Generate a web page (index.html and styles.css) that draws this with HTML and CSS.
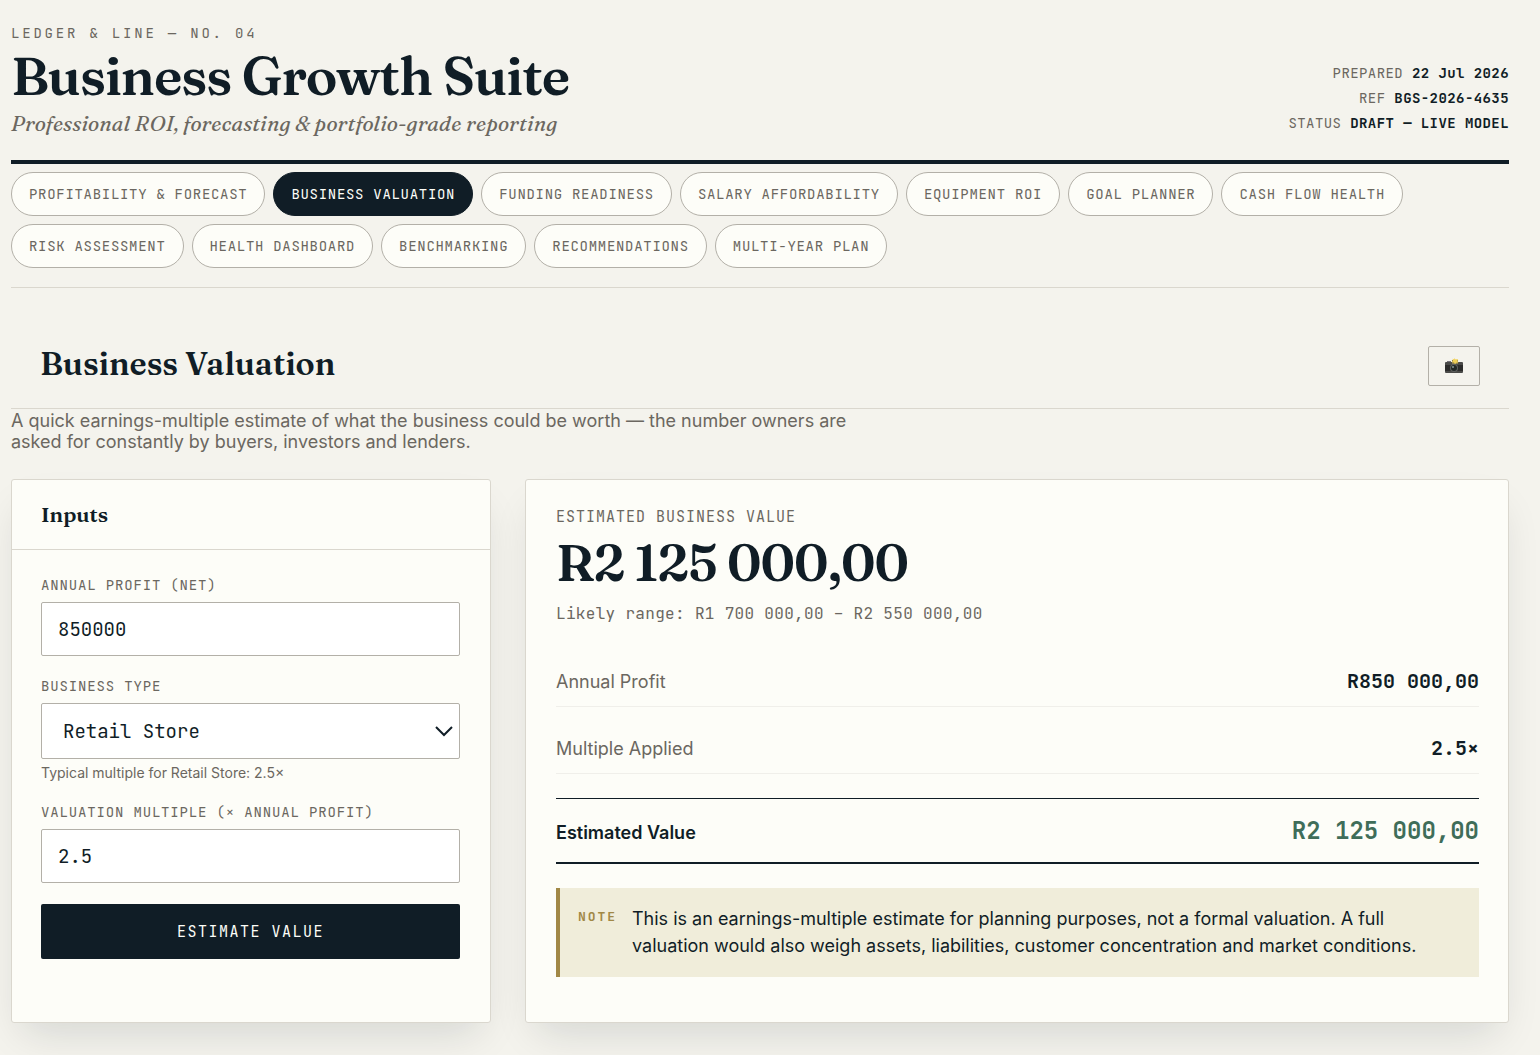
FILE: index.html
```html
<!DOCTYPE html>
<html lang="en">

<head>
    <meta charset="UTF-8" />
    <meta name="viewport" content="width=device-width, initial-scale=1" />
    <title>Business Growth Suite</title>
    <link rel="stylesheet" href="styles.css">
</head>

<body>
    <header class="masthead">
        <div>
            <div class="eyebrow">LEDGER &amp; LINE — NO. 04</div>
            <h1>Business Growth Suite</h1>
            <p class="tagline">Professional ROI, forecasting &amp; portfolio-grade reporting</p>
        </div>
        <div class="meta">
            <div>PREPARED <b>22 Jul 2026</b></div>
            <div>REF <b>BGS-2026-4635</b></div>
            <div>STATUS <b>DRAFT — LIVE MODEL</b></div>
        </div>
    </header>

    <nav class="tabs">
        <button class="tab">PROFITABILITY &amp; FORECAST</button>
        <button class="tab active">BUSINESS VALUATION</button>
        <button class="tab">FUNDING READINESS</button>
        <button class="tab">SALARY AFFORDABILITY</button>
        <button class="tab">EQUIPMENT ROI</button>
        <button class="tab">GOAL PLANNER</button>
        <button class="tab">CASH FLOW HEALTH</button>
        <button class="tab">RISK ASSESSMENT</button>
        <button class="tab">HEALTH DASHBOARD</button>
        <button class="tab">BENCHMARKING</button>
        <button class="tab">RECOMMENDATIONS</button>
        <button class="tab">MULTI-YEAR PLAN</button>
    </nav>

    <main>
        <div class="section-head">
            <h2>Business Valuation</h2>
            <button class="snap" aria-label="Save snapshot">
                <svg width="18" height="16" viewBox="0 0 18 16">
                    <rect x="2" y="3" width="4" height="2" fill="#77727a" />
                    <rect x="0" y="4" width="18" height="11" rx="1" fill="#4a4a48" />
                    <rect x="0" y="7" width="18" height="6" fill="#2c2c2b" />
                    <rect x="7" y="2" width="6" height="4" fill="#8d7f50" />
                    <path d="M9.500 0l1 1.500 2.500-.5-.7 2 1.200 1.500-2.300.3-1.200 1.400-1-1.600-2.300-.3 1.300-1.500-.4-2 1.600.6z" fill="#f0cf55" />
                    <circle cx="9" cy="10" r="4" fill="#5f6260" />
                    <circle cx="9" cy="10" r="3" fill="#222726" />
                    <circle cx="8" cy="9" r="1" fill="#8a9896" />
                </svg>
            </button>
        </div>
        <p class="intro">A quick earnings-multiple estimate of what the business could be worth — the number owners are asked for constantly by buyers, investors and lenders.</p>

        <div class="grid">
            <section class="card">
                <h3>Inputs</h3>
                <form class="form" onsubmit="return false">
                    <div class="field">
                        <label for="profit">ANNUAL PROFIT (NET)</label>
                        <input type="number" id="profit" value="850000" />
                    </div>
                    <div class="field">
                        <label for="type">BUSINESS TYPE</label>
                        <div class="select">
                            <select id="type">
                                <option>Retail Store</option>
                            </select>
                            <svg width="18" height="12" viewBox="0 0 18 12">
                                <path d="M1 1l8 8 8-8" fill="none" stroke="currentColor" stroke-width="2" />
                            </svg>
                        </div>
                        <div class="hint">Typical multiple for Retail Store: 2.5×</div>
                    </div>
                    <div class="field">
                        <label for="multiple">VALUATION MULTIPLE (× ANNUAL PROFIT)</label>
                        <input type="number" id="multiple" value="2.5" step="0.1" />
                    </div>
                    <button class="submit">ESTIMATE VALUE</button>
                </form>
            </section>

            <section class="card results">
                <div class="result-label">ESTIMATED BUSINESS VALUE</div>
                <div class="figure">R2 125 000,00</div>
                <div class="range">Likely range: R1 700 000,00 – R2 550 000,00</div>
                <dl>
                    <div class="row">
                        <dt>Annual Profit</dt>
                        <dd>R850 000,00</dd>
                    </div>
                    <div class="row">
                        <dt>Multiple Applied</dt>
                        <dd>2.5×</dd>
                    </div>
                    <div class="row total">
                        <dt>Estimated Value</dt>
                        <dd>R2 125 000,00</dd>
                    </div>
                </dl>
                <div class="note">
                    <span class="note-tag">NOTE</span>
                    <p>This is an earnings-multiple estimate for planning purposes, not a formal valuation. A full valuation would also weigh assets, liabilities, customer concentration and market conditions.</p>
                </div>
            </section>
        </div>
    </main>
</body>

</html>
```
FILE: styles.css
```css
:root {
    --paper: #f4f3ed;
    --card: #fdfdf8;
    --ink: #101d26;
    --muted: #6b6760;
    --line: #dad7ce;
    --edge: #b3b0a8;
    --gold: #a18846;
    --green: #3f6d59;
    --serif: Fraunces, "Liberation Serif", serif;
    --mono: "JetBrains Mono", "Liberation Mono", monospace;
    --sans: Inter, "Liberation Sans", sans-serif;
}

* {
    box-sizing: border-box;
}

body {
    margin: 0;
    padding: 22px 31px 32px 11px;
    background: var(--paper);
    color: var(--ink);
    font-family: var(--sans);
    font-size: 18px;
}

h1,
h2,
h3,
p,
dl,
dd {
    margin: 0;
}

button {
    cursor: pointer;
}

/* masthead */

.masthead {
    display: flex;
    justify-content: space-between;
    align-items: flex-end;
    padding-bottom: 22px;
    border-bottom: 4px solid var(--ink);
}

.eyebrow {
    font: 14px/22px var(--mono);
    letter-spacing: 0.2em;
    color: var(--muted);
}

h1 {
    font: 600 53px/64px var(--serif);
    letter-spacing: -0.02em;
}

.tagline {
    font: italic 500 21px/30px var(--serif);
    letter-spacing: 0.01em;
    color: var(--muted);
}

.meta {
    font: 14px/25px var(--mono);
    letter-spacing: 0.03em;
    color: var(--muted);
    text-align: right;
    padding-bottom: 2px;
}

.meta b {
    color: var(--ink);
}

/* tabs */

.tabs {
    display: flex;
    flex-wrap: wrap;
    gap: 8px;
    padding: 8px 0 19px;
    border-bottom: 1px solid var(--line);
}

.tab {
    height: 44px;
    padding: 0 17px;
    border: 1px solid var(--edge);
    border-radius: 22px;
    background: var(--card);
    color: var(--muted);
    font: 14px/20px var(--mono);
    letter-spacing: 0.05em;
}

.tab.active {
    background: var(--ink);
    border-color: var(--ink);
    color: var(--card);
}

/* section heading */

.section-head {
    display: flex;
    justify-content: space-between;
    align-items: flex-start;
    margin-top: 36px;
    padding: 22px 29px;
    border-bottom: 1px solid var(--line);
}

h2 {
    font: 600 32px/36px var(--serif);
}

.snap {
    display: flex;
    align-items: center;
    justify-content: center;
    width: 52px;
    height: 40px;
    padding: 0;
    border: 1px solid var(--edge);
    border-radius: 2px;
    background: none;
}

.intro {
    max-width: 860px;
    line-height: 21px;
    margin: 1px 0 27px;
    color: var(--muted);
}

/* cards */

.grid {
    display: grid;
    grid-template-columns: 480px 1fr;
    gap: 34px;
}

.card {
    background: var(--card);
    border: 1px solid var(--line);
    border-radius: 3px;
    box-shadow: 0 20px 40px -12px rgba(16, 29, 38, 0.14);
}

h3 {
    padding: 20px 29px;
    border-bottom: 1px solid var(--line);
    font: 600 21px/29px var(--serif);
}

.form {
    display: flex;
    flex-direction: column;
    gap: 19px;
    padding: 24px 30px 30px 29px;
}

.field label {
    display: block;
    margin-bottom: 6px;
    font: 14px/22px var(--mono);
    letter-spacing: 0.06em;
    color: var(--muted);
}

.field input,
.field select {
    display: block;
    width: 100%;
    height: 54px;
    padding: 0 16px;
    border: 1px solid var(--edge);
    border-radius: 2px;
    background: #fff;
    color: var(--ink);
    font: 19px/24px var(--mono);
}

.field input {
    appearance: textfield;
}

.field select {
    appearance: none;
    height: 56px;
    padding: 2px 21px 0;
}

.select {
    position: relative;
}

.select svg {
    position: absolute;
    right: 7px;
    top: 23px;
    pointer-events: none;
}

.hint {
    margin-top: 4px;
    font-size: 14px;
    line-height: 19px;
    color: var(--muted);
}

.submit {
    height: 55px;
    margin-top: 2px;
    border: 0;
    border-radius: 2px;
    background: var(--ink);
    color: var(--card);
    font: 15px/20px var(--mono);
    letter-spacing: 0.1em;
}

/* results */

.results {
    padding: 26px 29px 45px 30px;
}

.result-label {
    font: 15px/22px var(--mono);
    letter-spacing: 1px;
    color: var(--muted);
}

.figure {
    font: 600 51px/69px var(--serif);
    letter-spacing: -0.02em;
}

.range {
    margin: 6px 0 31px;
    font: 16px/22px var(--mono);
    letter-spacing: 0.02em;
    color: var(--muted);
}

.row {
    display: flex;
    justify-content: space-between;
    align-items: baseline;
    margin-top: 16px;
    padding: 13px 0 12px;
    border-bottom: 1px solid #f0efea;
    line-height: 24px;
}

.row dt {
    color: var(--muted);
}

.row dd {
    font: 600 20px/24px var(--mono);
}

.row.total {
    margin: 24px 0;
    padding: 18px 0 17px;
    border-top: 1px solid var(--ink);
    border-bottom: 2px solid var(--ink);
}

.total dt {
    color: var(--ink);
    font-weight: 600;
}

.total dd {
    color: var(--green);
    font-size: 24px;
    line-height: 27px;
}

.note {
    display: flex;
    gap: 15px;
    padding: 17px 18px 18px;
    border-left: 4px solid var(--gold);
    background: #f0edda;
    line-height: 27px;
}

.note-tag {
    font: bold 13px/24px var(--mono);
    letter-spacing: 0.15em;
    color: var(--gold);
}

@media (max-width: 900px) {
    .grid {
        grid-template-columns: 1fr;
    }
}
```
